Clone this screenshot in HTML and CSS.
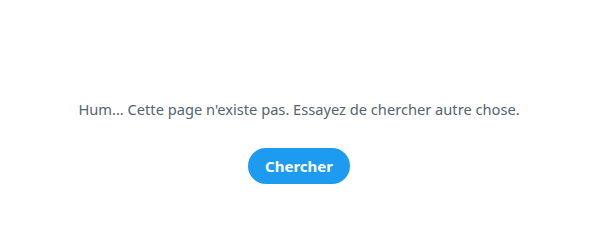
FILE: index.html
```html
<!DOCTYPE html>
<html lang="fr">
<head>
<meta charset="utf-8">
<link rel="stylesheet" href="styles.css">
</head>
<body>
<main class="page">
  <p class="message">Hum... Cette page n'existe pas. Essayez de chercher autre chose.</p>
  <button class="search-btn">Chercher</button>
</main>
</body>
</html>
```
FILE: styles.css
```css
html, body {
  margin: 0;
  background: #ffffff;
}
.page {
  display: flex;
  flex-direction: column;
  align-items: center;
  padding-top: 99px;
  font-family: "Noto Sans", "Open Sans", sans-serif;
}
.message {
  margin: 0;
  font-size: 14.65px;
  line-height: 20px;
  color: #536471;
}
.search-btn {
  margin-top: 29px;
  height: 36px;
  padding: 0 17px;
  border: none;
  border-radius: 18px;
  background: #1d9bf0;
  color: #ffffff;
  font-family: "Noto Sans", "Open Sans", sans-serif;
  font-weight: 700;
  font-size: 15px;
}
```
